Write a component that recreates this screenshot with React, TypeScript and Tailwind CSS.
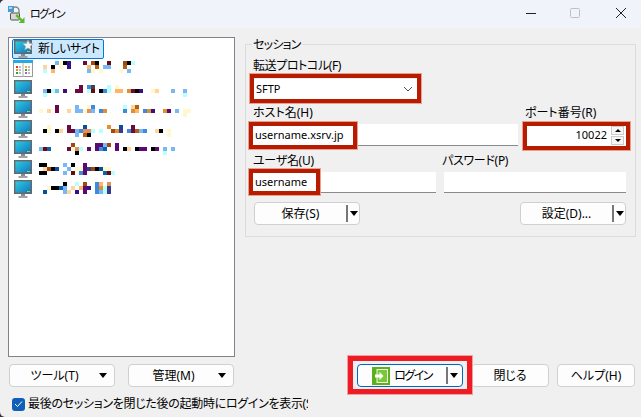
import type { ReactNode } from 'react'

// mosaic colours, keyed by a single letter
const C: Record<string, string> = {
  k: '#000000', b: '#7ab8f5', B: '#3f8ade', n: '#0a4f9e', N: '#0a62b0', c: '#b8ffff', y: '#fff8cc', p: '#ffd59a',
  o: '#ffb468', O: '#e09030', r: '#b0600f', R: '#a04a10', m: '#6a0a40', v: '#5a0a70', u: '#3a1080', i: '#3a3a8a', d: '#6a0a10', s: '#e09060', g: '#444444',
}

// each row: [row offset, "column:colour" cells for three scan lines]
const MOSAIC: { top: number; lines: string[] }[] = [
  { top: 2, lines: ['4b 5y 6k 7u 11m 13R 14k 17d 21R 22k 23c', '1p 3k 5y 7u 12o 14r 16b 17b 21r', '1c 3o 12b 13y 15y 20y 22b'] },
  { top: 6, lines: ['10m 12B 13g 17c 19y', '1b 2k 3c 4b 6u 9m 10m 12c 13d 15k 16B 17c 19o 20o 22O 23m 24k 25u 28y 29p 33b 36b', '1c 36c'] },
  { top: 6, lines: ['4m 9b 12y 13B 21c 23p 24r', '0y 2p 4m 7p 9b 10b 11y 12s 13b 15B 16O 21B 23O 24o 26B 27O 28u 31O 32v 34b 36y 37y', '36y'] },
  { top: 6, lines: ['2y 7m 11n 17O 20n 23m', '1k 2y 4k 5p 7m 8m 9b 10B 11s 12s 13c 15c 18R 19O 20i 22B 23m 24r 25b 26B 29p 30k 32y', '9b 11r 12k 32y'] },
  { top: 4, lines: ['8R 14v 15v 16b 17R 19v', '0b 1d 2N 7m 8y 9s 10c 12v 14v 15B 16N 19v 21k 22p 24k 25v 26v 28k 29v 31b 33b', '9k 31c'] },
  { top: 4, lines: ['0k 1k 6b 8k 11v', '1p 2R 3k 4n 7b 9y 10y 11v 12i 13R 14k 15n 16y 17y', '0k 1k 6b 8d 10B 11v 16N 17d 18c'] },
  { top: 3, lines: ['6k 9c 11R 14B 15o 17s', '2y 3k 4k 5N 6b 8p 10o 11v 12u 14B 15O 16c 17i', '1n 6b 7p 9u 11v 14B 15b 16c 17i'] },
]

function Mosaic({ top, lines }: { top: number; lines: string[] }) {
  return (
    <svg width="190" height="20" className="ml-[5px] shrink-0">
      {lines.map((line, row) =>
        line.split(' ').map(cell => (
          <rect
            key={row + cell}
            x={parseInt(cell) * 4}
            y={top + row * 4}
            width="4"
            height="4"
            fill={C[cell.slice(-1)]}
          />
        )),
      )}
    </svg>
  )
}

function MonitorIcon({ star }: { star?: boolean }) {
  return (
    <svg width="20" height="19" viewBox="0 0 20 19" className="shrink-0">
      <defs>
        <linearGradient id="scr" x1="0" y1="0" x2="1" y2="1">
          <stop offset="0" stopColor="#2fd0e0" />
          <stop offset="1" stopColor="#1272c0" />
        </linearGradient>
      </defs>
      <rect x="0.7" y="0.7" width="16.6" height="12.6" fill="url(#scr)" stroke="#68686c" strokeWidth="1.4" />
      <rect x="13" y="11" width="3" height="1" fill="#7ee060" />
      <rect x="7" y="14" width="4" height="2" fill="#8a8a8e" />
      <rect x="4.5" y="16" width="9" height="2" fill="#a4a4a8" />
      {star && <path d="M14 0l1.5 3.4 3.6.4-2.7 2.4.8 3.6L14 8l-3.2 1.8.8-3.6-2.7-2.4 3.6-.4z" fill="#f4f4f4" stroke="#a8a8a8" strokeWidth="0.6" />}
    </svg>
  )
}

function ListIcon() {
  return (
    <svg width="20" height="18" viewBox="0 0 20 18" className="-ml-px mr-px shrink-0">
      <rect x="0.5" y="0.5" width="19" height="16" fill="#fff" stroke="#9a9a9a" />
      <rect x="0" y="0" width="20" height="3" fill="#2aa8e0" />
      <rect x="9.5" y="3" width="1" height="14" fill="#b0b0b0" />
      <rect x="3" y="6" width="2" height="2" fill="#e03020" />
      <rect x="3" y="9" width="2" height="2" fill="#e09020" />
      <rect x="3" y="12" width="2" height="2" fill="#30a030" />
      <rect x="12" y="6" width="2" height="2" fill="#e0b020" />
      <rect x="12" y="9" width="2" height="2" fill="#50a030" />
      <rect x="12" y="12" width="2" height="2" fill="#a060e0" />
      <path d="M6 7h2M6 10h2M6 13h2M15 7h2M15 10h2M15 13h2" stroke="#777" />
    </svg>
  )
}

function AppIcon() {
  return (
    <svg width="17" height="17" viewBox="0 0 17 17" className="shrink-0">
      <rect x="0" y="0" width="6" height="6" fill="#3a9ee0" />
      <rect x="1" y="1" width="3" height="2" fill="#a8dcf8" />
      <path d="M4 7V4.5a3.5 3.5 0 0 1 7 0V7" fill="none" stroke="#8a8a8a" strokeWidth="1.4" />
      <rect x="2.5" y="7" width="9" height="7" rx="1" fill="#d8d8d8" stroke="#555" />
      <path d="M9 8l5.5 5.5L16.5 11v6H10.5l2.2-2L7.5 10z" fill="#5cb82c" />
    </svg>
  )
}

function Caret() {
  return <span className="h-0 w-0 shrink-0 border-x-[4.5px] border-t-[5px] border-x-transparent border-t-black" />
}

function Btn({
  className,
  kind,
  children,
}: {
  className: string
  kind?: 'menu' | 'split'
  children: ReactNode
}) {
  return (
    <div className={`flex h-[23px] shrink-0 items-center rounded-[4px] border bg-[#fdfdfd] ${className}`}>
      <span className="flex flex-1 items-center justify-center gap-1">{children}</span>
      {kind === 'menu' && <span className="mr-[4px] flex"><Caret /></span>}
      {kind === 'split' && (
        <span className="mr-[1px] flex items-center gap-[2px]">
          <span className="h-[17px] w-[2px] bg-[#777]" />
          <Caret />
        </span>
      )}
    </div>
  )
}

function TextBox({ className, children }: { className: string; children?: ReactNode }) {
  return (
    <div className={`relative flex items-center border-b border-[#8a8a8a] bg-white pl-[2px] text-[11px] ${className}`}>
      {children}
    </div>
  )
}

// dark red annotation frame drawn over a form control
function Mark({ className }: { className: string }) {
  return <div className={`absolute border-[4px] border-[#b71c00] shadow-[0_0_0_1px_#e8a090] ${className}`} />
}

export default function App() {
  return (
    <div className="h-[417px] w-[641px] overflow-hidden bg-[#333]">
      <div
        className="flex h-full flex-col overflow-hidden rounded-l-[5px] bg-[#f0f0f0] text-[12px] leading-4 text-black [font-family:'Noto_Sans','Noto_Sans_CJK_JP',sans-serif] [font-feature-settings:'palt']"
      >
        {/* title bar */}
        <div className="flex h-[28px] shrink-0 items-center bg-[#f0f3f9] pl-[8px]">
          <AppIcon />
          <span className="ml-[5px] text-[11px] tracking-[-1.5px]">ログイン</span>
          <div className="ml-auto mr-[15px] -mt-[2px] flex items-center">
            <svg width="10" height="10" viewBox="0 0 10 10"><path d="M0 5.5h10" stroke="#222" /></svg>
            <svg width="10" height="10" viewBox="0 0 10 10" className="ml-[34px]"><rect x="0.5" y="0.5" width="9" height="9" rx="1" fill="none" stroke="#c0c0c0" /></svg>
            <svg width="10" height="10" viewBox="0 0 10 10" className="ml-[36px]"><path d="M0 0l10 10M10 0L0 10" stroke="#222" /></svg>
          </div>
        </div>

        <div className="flex flex-1 flex-col px-[8px]">
          <div className="flex items-start">
            {/* site tree */}
            <div className="mt-[9px] h-[320px] w-[227px] shrink-0 border border-[#82828c] bg-white pl-[3px] pt-px">
              <div className="flex h-5 w-[92px] items-center rounded-[2px] border border-[#0078d7] bg-[#cce8ff] pl-px">
                <MonitorIcon star />
                <span className="ml-[4px] whitespace-nowrap tracking-[-0.5px]">新しいサイト</span>
              </div>
              <div className="flex h-5 items-center pl-[2px]">
                <ListIcon />
                <Mosaic {...MOSAIC[0]} />
              </div>
              {MOSAIC.slice(1).map(row => (
                <div key={row.lines[0]} className="flex h-5 items-center pl-[2px]">
                  <MonitorIcon />
                  <Mosaic {...row} />
                </div>
              ))}
            </div>

            {/* session group */}
            <div className="relative ml-[10px] mt-[16px] h-[193px] w-[391px] shrink-0 border border-[#dcdcdc] pl-[7px] pr-[9px] pt-[13px]">
              <span className="absolute -top-[8px] left-[6px] bg-[#f0f0f0] px-px tracking-[-0.8px]">セッション</span>
              <div className="h-4 tracking-[-0.4px]">転送プロトコル(F)</div>
              <div className="relative ml-px mt-[5px] flex h-[20px] w-[163px] items-center justify-between bg-white pl-[2px] pr-[4px] text-[11px]">
                <span>SFTP</span>
                <svg width="10" height="6" viewBox="0 0 10 6"><path d="M1 1l4 4 4-4" fill="none" stroke="#555" /></svg>
                <Mark className="-left-[4px] -right-[4px] -top-[5px] -bottom-[4px]" />
              </div>

              <div className="mt-[6px] flex h-4 justify-between">
                <span>ホスト名(H)</span>
                <span className="w-[101px]">ポート番号(R)</span>
              </div>
              <div className="mt-[3px] flex justify-between">
                <TextBox className="h-[22px] w-[265px]">
                  username.xsrv.jp
                  <Mark className="-left-[4px] -top-[2px] -bottom-[4px] w-[108px]" />
                </TextBox>
                <div className="relative flex h-[22px] w-[99px] items-center justify-end bg-white pr-[19px] text-[11px]">
                  10022
                  <div className="absolute right-[2px] top-[2px] flex w-[13px] flex-col gap-px">
                    <span className="flex h-[9px] items-center justify-center border border-[#ccc] bg-[#f6f6f6]">
                      <span className="h-0 w-0 border-x-[3.5px] border-b-[3px] border-x-transparent border-b-black" />
                    </span>
                    <span className="flex h-[9px] items-center justify-center border border-[#ccc] bg-[#f6f6f6]">
                      <span className="h-0 w-0 border-x-[3.5px] border-t-[3px] border-x-transparent border-t-black" />
                    </span>
                  </div>
                  <Mark className="-left-[4px] -right-[4px] -top-[2px] -bottom-[4px]" />
                </div>
              </div>

              <div className="mt-[7px] flex h-4">
                <span className="w-[190px] tracking-[-0.3px]">ユーザ名(U)</span>
                <span className="-ml-px tracking-[-0.3px]">パスワード(P)</span>
              </div>
              <div className="mt-[3px] flex justify-between">
                <TextBox className="h-[21px] w-[183px]">
                  username
                  <Mark className="-left-[4px] -top-[3px] -bottom-[3px] w-[71px]" />
                </TextBox>
                <TextBox className="h-[21px] w-[182px]" />
              </div>

              <div className="mt-[9px] flex justify-between pl-px">
                <Btn className="w-[106px] border-[#d0d0d0]" kind="split">保存(S)</Btn>
                <Btn className="w-[106px] border-[#d0d0d0]" kind="split">設定(D)...</Btn>
              </div>
            </div>
          </div>

          {/* bottom buttons */}
          <div className="ml-px mt-[7px] flex">
            <Btn className="w-[106px] border-[#d0d0d0] pr-[3px]" kind="menu">ツール(T)</Btn>
            <Btn className="ml-[13px] w-[106px] border-[#d0d0d0] pr-[3px]" kind="menu">管理(M)</Btn>
            <div className="relative ml-[123px] shrink-0">
              <Btn className="w-[106px] border-[#0067c0] pr-[3px]" kind="split">
                <svg width="18" height="18" viewBox="0 0 18 18" className="shrink-0">
                  <rect width="18" height="18" fill="#5cb01c" />
                  <rect x="5" y="2.5" width="10.5" height="13" fill="#7cc63a" stroke="#eef8e0" />
                  <path d="M3 7.5h4.5V5l4 4-4 4v-2.5H3z" fill="#fff" />
                </svg>
                <span className="tracking-[-1.5px]">ログイン</span>
              </Btn>
              <div className="absolute -left-[9px] -top-[8px] h-[38px] w-[124px] border-[5px] border-[#ed1c24] shadow-[0_0_0_1px_#f4a0a0]" />
            </div>
            <Btn className="ml-[8px] w-[78px] border-[#d0d0d0]">閉じる</Btn>
            <Btn className="ml-[8px] w-[78px] border-[#d0d0d0]">ヘルプ(H)</Btn>
          </div>

          <div className="ml-[4px] mt-[9px] flex items-center">
            <span className="flex h-[13px] w-[13px] shrink-0 items-center justify-center rounded-[3px] bg-[#0f5fb8]">
              <svg width="9" height="8" viewBox="0 0 9 8"><path d="M1 4l2.5 2.5L8 1.5" fill="none" stroke="#fff" /></svg>
            </span>
            <span className="ml-[3px] w-[280px] overflow-hidden whitespace-nowrap tracking-[-0.3px]">最後のセッションを閉じた後の起動時にログインを表示(S)</span>
          </div>
        </div>
      </div>
    </div>
  )
}
